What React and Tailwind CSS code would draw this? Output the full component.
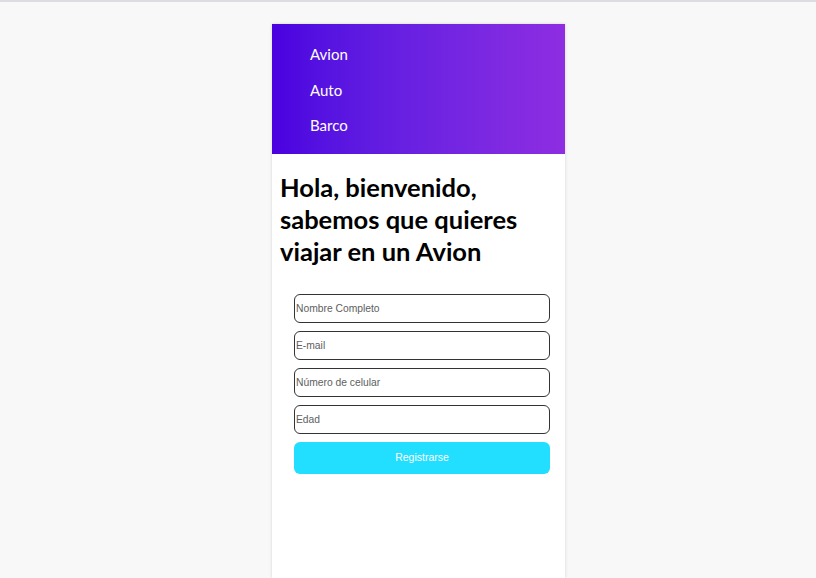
const App = () => {
  const nav = ["Avion", "Auto", "Barco"];
  const fields = ["Nombre Completo", "E-mail", "Número de celular", "Edad"];

  return (
    <div className="min-h-screen bg-[#f8f8f8] border-t-2 border-[#dcdde1] flex justify-center pt-[22px] pl-[21px]">
      <div className="w-[293px] min-h-[554px] bg-white shadow-[0_0_3px_rgba(0,0,0,0.15)] font-['Lato',sans-serif]">
        <nav className="h-[130px] bg-gradient-to-r from-[#4a00e0] to-[#8e2de2] pl-[38px] pt-[19px] flex flex-col gap-[12px]">
          {nav.map((item) => (
            <a key={item} href="#" className="text-white text-[15px] leading-[23.5px]">
              {item}
            </a>
          ))}
        </nav>

        <h1 className="px-[8px] pt-[17px] text-[25.5px] leading-[32px] font-bold text-black">
          Hola, bienvenido, sabemos que quieres viajar en un Avion
        </h1>

        <form className="mt-[27px] ml-[22px] w-[256px] flex flex-col gap-[8px] font-['Liberation_Sans',Arial,sans-serif]">
          {fields.map((f) => (
            <input
              key={f}
              type="text"
              placeholder={f}
              className="h-[29px] w-full border-[1.5px] border-[#333] rounded-[6px] px-[1px] text-[10.3px] placeholder:text-[#606060] outline-none"
            />
          ))}
          <button
            type="button"
            className="h-[32px] w-full bg-[#22deff] text-white text-[10.5px] rounded-[6px]"
          >
            Registrarse
          </button>
        </form>
      </div>
    </div>
  );
};

export default App;
